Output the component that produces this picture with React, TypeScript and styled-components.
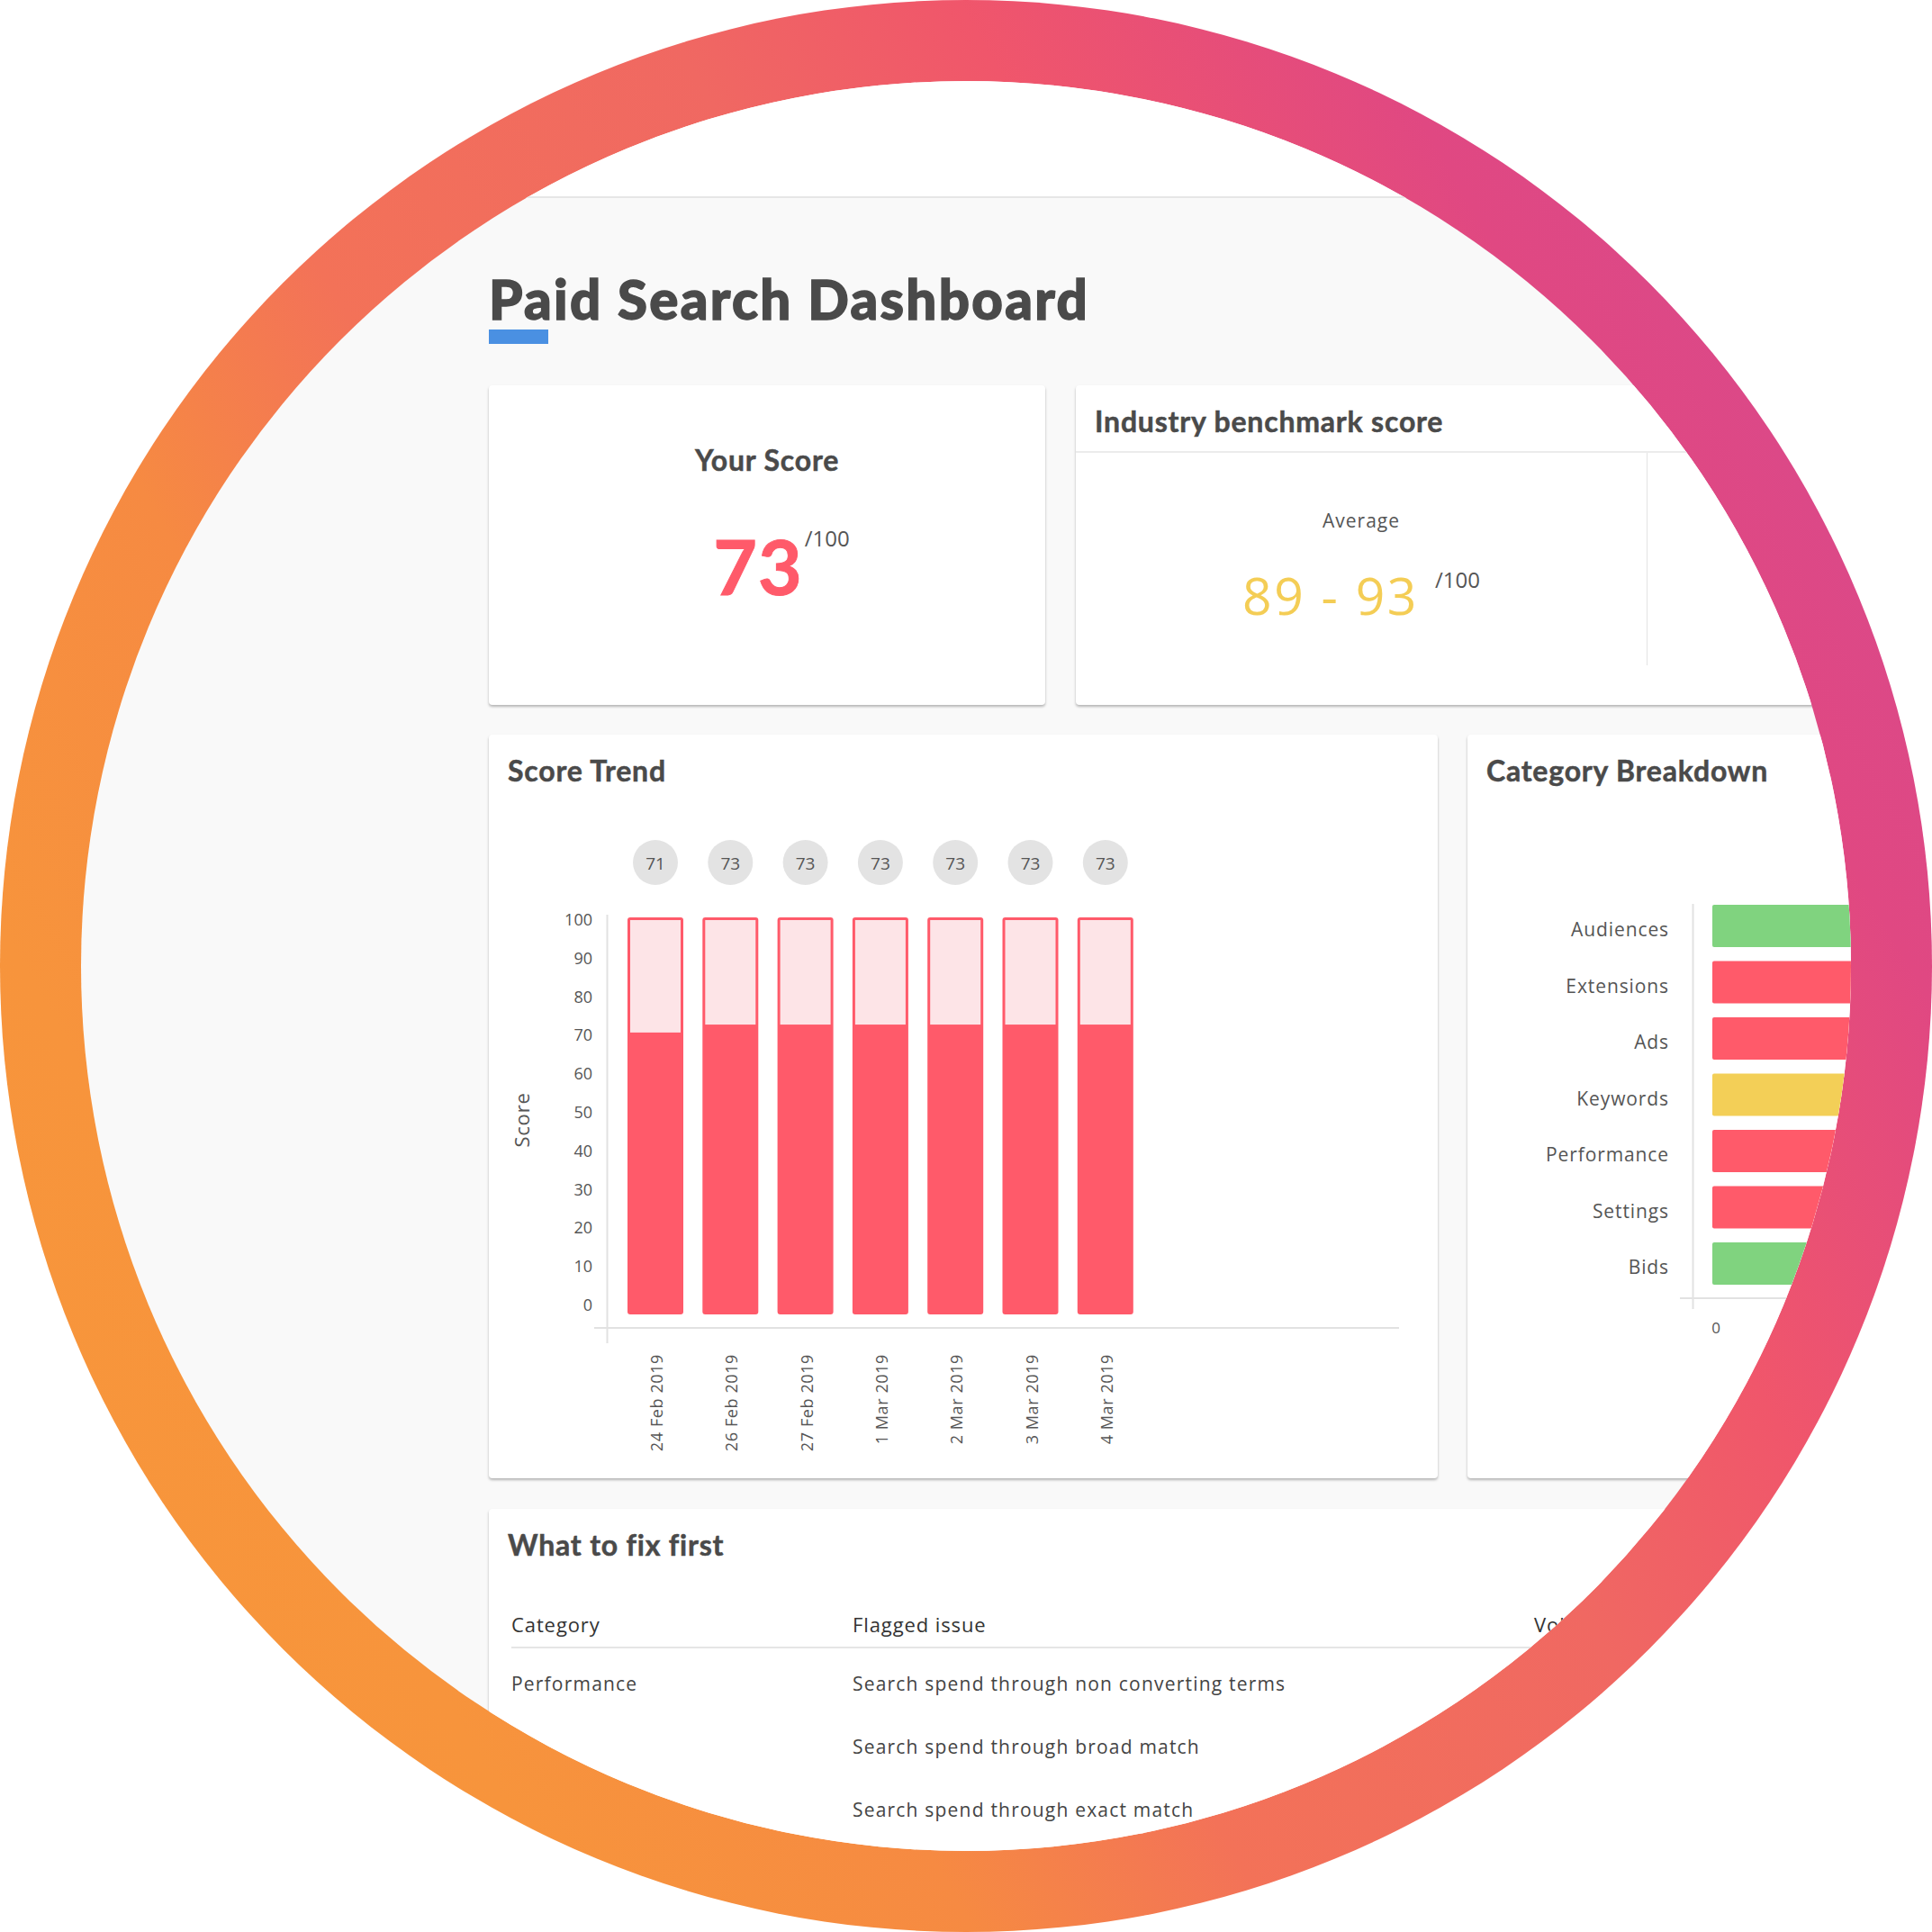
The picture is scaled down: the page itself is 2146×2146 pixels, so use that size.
import React from "react";
import styled, { createGlobalStyle } from "styled-components";

const GlobalStyle = createGlobalStyle`
  html, body { margin: 0; padding: 0; background: #ffffff; }
  body { font-family: "Open Sans", "Liberation Sans", sans-serif; color: #4a4a4a; }
  * { box-sizing: border-box; }
`;

const RED = "#ff5a6a";
const PINK = "#fde4e7";
const GREEN = "#80d37f";
const YELLOW = "#f3cf57";

// gradient ring + round lens that clips the dashboard screenshot
const Ring = styled.div`
  width: 2146px;
  height: 2146px;
  border-radius: 50%;
  padding: 90px;
  background: linear-gradient(
    60deg,
    #f8983a 0%,
    #f7943c 19%,
    #f68a42 32%,
    #f37258 42%,
    #f06862 58%,
    #f0566b 68%,
    #e04882 81%,
    #d24a94 100%
  );
`;

const Lens = styled.div`
  width: 100%;
  height: 100%;
  border-radius: 50%;
  overflow: hidden;
  background: #f9f9f9;
`;

const TopBar = styled.div`
  height: 130px;
  background: #ffffff;
  border-bottom: 2px solid #e6e6e6;
`;

const Main = styled.main`
  padding: 82px 0 0 453px;
  width: 2400px;
`;

const PageTitle = styled.h1`
  margin: 0;
  font-family: Lato, "Liberation Sans", sans-serif;
  font-weight: 900;
  font-size: 60px;
  line-height: 60px;
  color: #4a4a4a;
  letter-spacing: 2.3px;
  -webkit-text-stroke: 1.4px #4a4a4a;
`;

const Accent = styled.div`
  width: 66px;
  height: 16px;
  margin-top: 4px;
  background: #4a90e2;
`;

const Row = styled.div<{ $gap: number }>`
  display: flex;
  gap: ${(p) => p.$gap}px;
  margin-top: ${(p) => p.$gap}px;
`;

const TopRow = styled(Row)`
  margin-top: 46px;
`;

const Card = styled.section<{ $w: number; $h: number }>`
  flex-shrink: 0;
  width: ${(p) => p.$w}px;
  height: ${(p) => p.$h}px;
  background: #ffffff;
  border-radius: 4px;
  box-shadow: 0 2px 3px rgba(0, 0, 0, 0.28);
  overflow: hidden;
`;

const CardTitle = styled.h2`
  margin: 0;
  font-family: Lato, "Liberation Sans", sans-serif;
  font-weight: 700;
  font-size: 32px;
  line-height: 40px;
  color: #4a4a4a;
  letter-spacing: 0.8px;
  -webkit-text-stroke: 0.5px #4a4a4a;
`;

const TitleBlock = styled.div`
  height: 70px;
  padding: 20px 21px 0;
`;

const ScoreCard = styled(Card)`
  display: flex;
  flex-direction: column;
  align-items: center;
  padding-top: 63px;
`;

const ScoreRow = styled.div`
  display: flex;
  align-items: flex-start;
  margin-top: 56px;
  padding-left: 32px;
`;

const BigScore = styled.span`
  font-family: Lato, "Liberation Sans", sans-serif;
  font-weight: 700;
  font-size: 84px;
  line-height: 84px;
  letter-spacing: 1px;
  color: ${RED};
  -webkit-text-stroke: 1px ${RED};
`;

const OutOf = styled.span<{ $gap: number }>`
  margin-left: ${(p) => p.$gap}px;
  margin-top: -1px;
  font-size: 24px;
  line-height: 24px;
  color: #555555;
`;

const BenchHeader = styled.div`
  height: 75px;
  padding: 20px 21px 0;
  border-bottom: 2px solid #ececec;
`;

const BenchBody = styled.div`
  display: flex;
`;

const BenchColumn = styled.div`
  width: 635px;
  height: 236px;
  border-right: 1px solid #e3e3e3;
  display: flex;
  flex-direction: column;
  align-items: center;
  padding-top: 61px;
`;

const SmallLabel = styled.div`
  font-size: 21px;
  line-height: 28px;
  letter-spacing: 1px;
  color: #555555;
`;

const RangeRow = styled.div`
  display: flex;
  align-items: flex-start;
  margin-top: 41px;
`;

const RangeValue = styled.span`
  font-size: 57px;
  line-height: 57px;
  letter-spacing: 2.5px;
  color: #f4cd55;
`;

const Chart = styled.svg`
  display: block;
  text {
    font-family: "Open Sans", "Liberation Sans", sans-serif;
    fill: #555555;
  }
`;

const TableHead = styled.div`
  display: grid;
  grid-template-columns: 379px 757px 1fr;
  align-items: center;
  height: 52px;
  margin: 33px 0 0 25px;
  border-bottom: 2px solid #e5e5e5;
  font-size: 22px;
  letter-spacing: 0.9px;
  color: #333333;
`;

const TableBody = styled.div`
  padding-top: 4px;
  margin-left: 25px;
`;

const TableRow = styled.div`
  display: grid;
  grid-template-columns: 379px 757px 1fr;
  align-items: center;
  height: 70px;
  font-size: 21px;
  letter-spacing: 1.2px;
  color: #444444;
`;

const trend = [
  { date: "24 Feb 2019", score: 71 },
  { date: "26 Feb 2019", score: 73 },
  { date: "27 Feb 2019", score: 73 },
  { date: "1 Mar 2019", score: 73 },
  { date: "2 Mar 2019", score: 73 },
  { date: "3 Mar 2019", score: 73 },
  { date: "4 Mar 2019", score: 73 },
];

const categories = [
  { name: "Audiences", color: GREEN, width: 760 },
  { name: "Extensions", color: RED, width: 520 },
  { name: "Ads", color: RED, width: 560 },
  { name: "Keywords", color: YELLOW, width: 640 },
  { name: "Performance", color: RED, width: 480 },
  { name: "Settings", color: RED, width: 500 },
  { name: "Bids", color: GREEN, width: 720 },
];

const issues = [
  { category: "Performance", issue: "Search spend through non converting terms", volume: "High" },
  { category: "", issue: "Search spend through broad match", volume: "High" },
  { category: "", issue: "Search spend through exact match", volume: "Medium" },
];

function TrendChart() {
  const top = 133;
  const h = 441;
  const w = 62;
  return (
    <Chart width={1054} height={756}>
      <line x1={131.5} y1={130} x2={131.5} y2={606} stroke="#e2e2e2" strokeWidth={2} />
      <line x1={117} y1={589} x2={1011} y2={589} stroke="#e2e2e2" strokeWidth={2} />
      {[0, 10, 20, 30, 40, 50, 60, 70, 80, 90, 100].map((t, i) => (
        <text key={t} x={115} y={563 - i * 42.8} textAnchor="end" dominantBaseline="central" fontSize={18}>
          {t}
        </text>
      ))}
      <text
        transform="translate(36 358) rotate(-90)"
        textAnchor="middle"
        dominantBaseline="central"
        fontSize={22}
        letterSpacing={0.8}
      >
        Score
      </text>
      {trend.map((d, i) => {
        const cx = 185 + i * 83.3;
        const x = cx - w / 2;
        const empty = ((100 - d.score) / 100) * h;
        return (
          <g key={d.date}>
            <circle cx={cx} cy={72} r={25} fill="#e3e3e3" />
            <text x={cx} y={73} textAnchor="middle" dominantBaseline="central" fontSize={19}>
              {d.score}
            </text>
            <rect x={x} y={top} width={w} height={h} rx={3} fill={RED} />
            <rect x={x + 3} y={top + 3} width={w - 6} height={empty - 3} fill={PINK} />
            <text
              transform={`translate(${cx + 1} 618) rotate(-90)`}
              textAnchor="end"
              dominantBaseline="central"
              fontSize={18}
              letterSpacing={0.6}
            >
              {d.date}
            </text>
          </g>
        );
      })}
    </Chart>
  );
}

function CategoryChart() {
  return (
    <Chart width={900} height={756}>
      <line x1={250.5} y1={118} x2={250.5} y2={568} stroke="#e2e2e2" strokeWidth={2} />
      <line x1={236} y1={556} x2={900} y2={556} stroke="#e2e2e2" strokeWidth={2} />
      {categories.map((c, i) => {
        const y = 119 + i * 62.5;
        return (
          <g key={c.name}>
            <text
              x={224}
              y={y + 27}
              textAnchor="end"
              dominantBaseline="central"
              fontSize={21}
              letterSpacing={0.9}
            >
              {c.name}
            </text>
            <rect x={272} y={y} width={c.width} height={47} rx={2} fill={c.color} />
          </g>
        );
      })}
      <text x={276} y={588} textAnchor="middle" dominantBaseline="central" fontSize={17}>
        0
      </text>
    </Chart>
  );
}

export default function App() {
  return (
    <>
      <GlobalStyle />
      <Ring>
        <Lens>
          <TopBar />
          <Main>
            <PageTitle>Paid Search Dashboard</PageTitle>
            <Accent />

            <TopRow $gap={34}>
              <ScoreCard $w={618} $h={355}>
                <CardTitle>Your Score</CardTitle>
                <ScoreRow>
                  <BigScore>73</BigScore>
                  <OutOf $gap={2}>/100</OutOf>
                </ScoreRow>
              </ScoreCard>

              <Card $w={1100} $h={355}>
                <BenchHeader>
                  <CardTitle>Industry benchmark score</CardTitle>
                </BenchHeader>
                <BenchBody>
                  <BenchColumn>
                    <SmallLabel>Average</SmallLabel>
                    <RangeRow>
                      <RangeValue>89 - 93</RangeValue>
                      <OutOf $gap={18}>/100</OutOf>
                    </RangeRow>
                  </BenchColumn>
                </BenchBody>
              </Card>
            </TopRow>

            <Row $gap={33}>
              <Card $w={1054} $h={826}>
                <TitleBlock>
                  <CardTitle>Score Trend</CardTitle>
                </TitleBlock>
                <TrendChart />
              </Card>
              <Card $w={900} $h={826}>
                <TitleBlock>
                  <CardTitle>Category Breakdown</CardTitle>
                </TitleBlock>
                <CategoryChart />
              </Card>
            </Row>

            <Row $gap={34}>
              <Card $w={1500} $h={600}>
                <TitleBlock>
                  <CardTitle>What to fix first</CardTitle>
                </TitleBlock>
                <TableHead>
                  <span>Category</span>
                  <span>Flagged issue</span>
                  <span>Volume</span>
                </TableHead>
                <TableBody>
                  {issues.map((r) => (
                    <TableRow key={r.issue}>
                      <span>{r.category}</span>
                      <span>{r.issue}</span>
                      <span>{r.volume}</span>
                    </TableRow>
                  ))}
                </TableBody>
              </Card>
            </Row>
          </Main>
        </Lens>
      </Ring>
    </>
  );
}
